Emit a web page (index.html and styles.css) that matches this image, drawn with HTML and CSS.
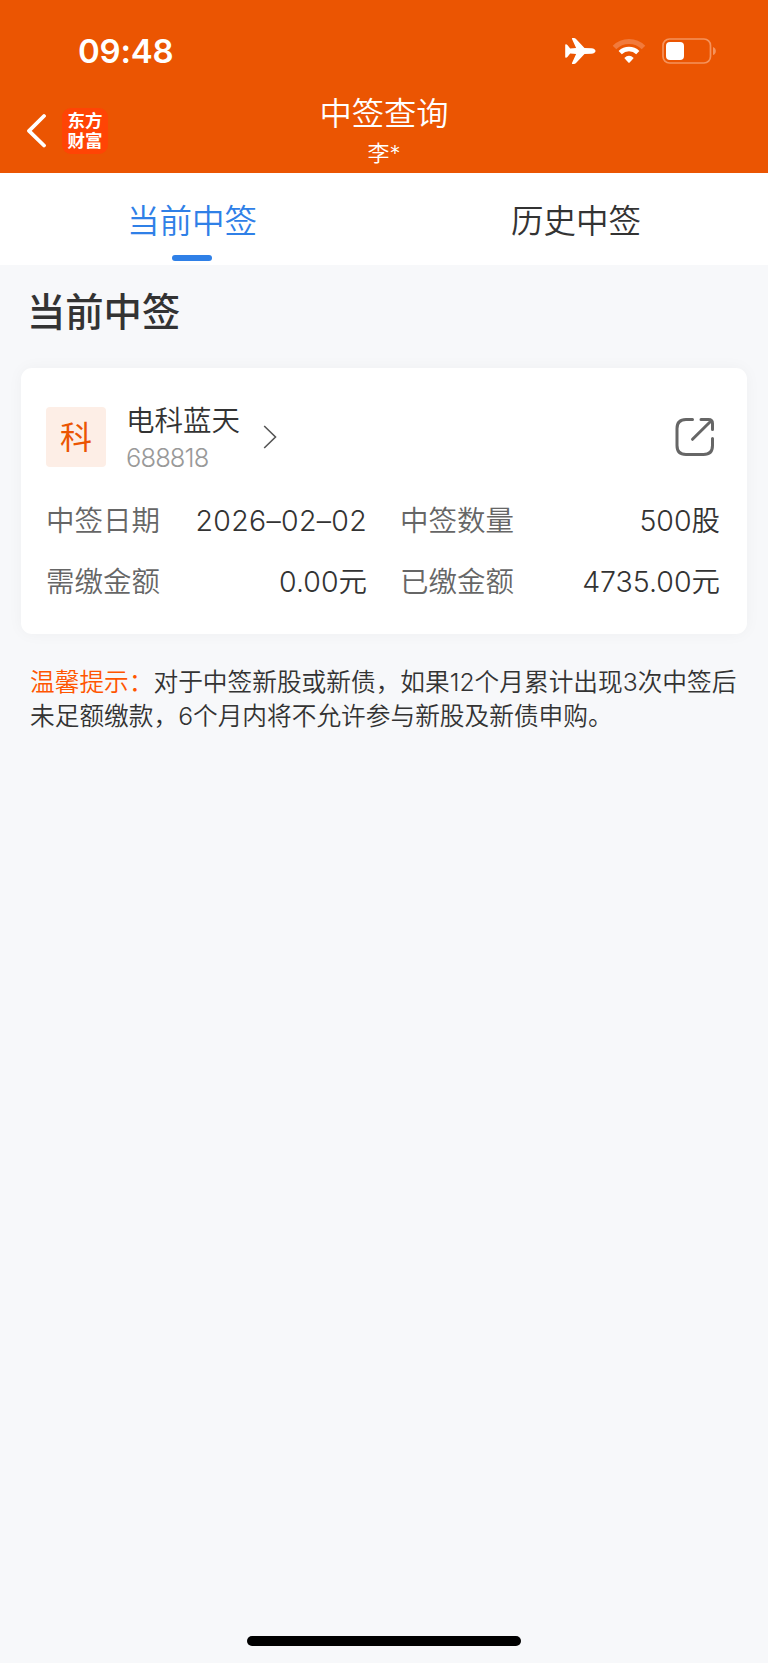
FILE: index.html
```html
<!DOCTYPE html>
<html lang="zh-CN">

<head>
    <meta charset="UTF-8">
    <title>中签查询</title>
    <link rel="stylesheet" href="styles.css">
</head>

<body>
    <header class="header">
        <div class="status_bar">
            <span class="time">09:48</span>
            <div class="status_icons">
                <svg class="plane" viewBox="0 0 31 28" width="31" height="28">
                    <path d="M26.500 11.200C29 11.500 30.500 12.500 30.500 14S29 16.500 26.500 16.800L19.500 17L10.800 26.200Q10 27 9 27H7.500Q6.600 27 7 26.100L11.100 16.900L5.200 16.500L2.400 20Q1.900 20.800 0.900 20.800Q0.200 20.800 0.200 20V8Q0.200 7.200 0.900 7.200Q1.900 7.200 2.400 8L5.200 11.500L11.100 11.100L7 1.900Q6.600 1 7.500 1H9Q10 1 10.800 1.800L19.500 11Z" fill="#fff"/>
                </svg>
                <svg class="wifi" viewBox="0 0 34 26" width="34" height="26">
                    <path d="M2.500 9.600A20.500 20.500 0 0 1 31.500 9.600" fill="none" stroke="#f17a3c" stroke-width="5"/>
                    <path d="M8.200 14.600A12.700 12.700 0 0 1 25.800 14.600" fill="none" stroke="#fff" stroke-width="4.600"/>
                    <path d="M12.300 19.900Q17 15.800 21.700 19.900L17.700 24.400Q17 25.100 16.300 24.400Z" fill="#fff"/>
                </svg>
                <svg class="battery" viewBox="0 0 54 26" width="54" height="26">
                    <rect x="1" y="1" width="47.500" height="24" rx="6.500" fill="none" stroke="#f5935c" stroke-width="1.700"/>
                    <rect x="4" y="4" width="18" height="18" rx="4" fill="#fff"/>
                    <path d="M51 9Q53.800 10 53.800 13T51 17Z" fill="#f5935c"/>
                </svg>
            </div>
        </div>
        <div class="nav_bar">
            <div class="nav_left">
                <svg class="back" viewBox="0 0 20 36" width="20" height="36">
                    <path d="M18 3L3 17.800L18 32.500" fill="none" stroke="#fff" stroke-width="3.800" stroke-linecap="round" stroke-linejoin="round"/>
                </svg>
                <div class="logo">东方<br>财富</div>
            </div>
            <div class="nav_title">
                <h1>中签查询</h1>
                <p>李*</p>
            </div>
        </div>
    </header>

    <nav class="tabs">
        <a class="tab active">当前中签</a>
        <a class="tab">历史中签</a>
    </nav>

    <main class="content">
        <h2>当前中签</h2>

        <section class="card">
            <div class="stock">
                <span class="badge">科</span>
                <div class="stock_info">
                    <div class="stock_name">电科蓝天</div>
                    <div class="stock_code">688818</div>
                </div>
                <svg class="arrow" viewBox="0 0 14 24" width="14" height="24">
                    <path d="M1.200 1L12.500 12L1.200 23" fill="none" stroke="#555" stroke-width="1.600"/>
                </svg>
                <svg class="share" viewBox="0 0 40 40" width="40" height="40">
                    <g fill="none" stroke="#666" stroke-width="3" stroke-linecap="round" stroke-linejoin="round">
                        <path d="M17.500 2.500H11Q2 2.500 2 11.500V28.500Q2 37.500 11 37.500H28.500Q37.500 37.500 37.500 28.500V21.500"/>
                        <path d="M26 2.500H33.500Q37.500 2.500 37.500 6.500V12.500M36 4L17.500 22.300"/>
                    </g>
                </svg>
            </div>

            <div class="details">
                <div class="item"><span class="label">中签日期</span><span class="value date">2026–02–02</span></div>
                <div class="item"><span class="label">中签数量</span><span class="value">500股</span></div>
                <div class="item"><span class="label">需缴金额</span><span class="value">0.00元</span></div>
                <div class="item"><span class="label">已缴金额</span><span class="value">4735.00元</span></div>
            </div>
        </section>

        <p class="tips"><span>温馨提示：</span>对于中签新股或新债，如果12个月累计出现3次中签后<br>未足额缴款，6个月内将不允许参与新股及新债申购。</p>
    </main>

    <div class="home_bar"></div>
</body>

</html>
```
FILE: styles.css
```css
* {
    margin: 0;
    padding: 0;
    box-sizing: border-box;
}

body {
    display: flex;
    flex-direction: column;
    height: 1663px;
    background: #f7f8fa;
    color: #333;
    font-family: Inter, "Noto Sans CJK SC", sans-serif;
    font-weight: 350;
}

h1,
h2 {
    font-weight: 350;
}

/* header */
.header {
    height: 173px;
    background: #eb5502;
    color: #fff;
}

.status_bar {
    display: flex;
    justify-content: space-between;
    height: 96px;
    padding: 30px 52px 0 78px;
}

.time {
    height: 42px;
    font-size: 33px;
    line-height: 43px;
    font-weight: 600;
    letter-spacing: -.2px;
}

.status_icons {
    display: flex;
    align-items: center;
    height: 42px;
}

.wifi {
    margin-left: 16px;
}

.battery {
    margin-left: 16px;
}

.nav_bar {
    display: grid;
    grid-template-columns: 1fr auto 1fr;
}

.nav_left {
    display: flex;
    align-items: center;
    height: 70px;
    padding-left: 26px;
}

.logo {
    width: 46px;
    height: 46px;
    margin-left: 16px;
    padding-top: 3px;
    border-radius: 9px;
    background: #ff4405;
    font-size: 17.5px;
    line-height: 19.5px;
    font-weight: 700;
    text-align: center;
}

.nav_title {
    text-align: center;
}

.nav_title h1 {
    font-size: 32.3px;
    line-height: 36px;
}

.nav_title p {
    font-size: 22px;
    line-height: 42px;
}

/* tabs */
.tabs {
    display: flex;
    height: 92px;
    background: #fff;
}

.tab {
    display: flex;
    flex: 1;
    flex-direction: column;
    align-items: center;
    font-size: 32.5px;
    line-height: 97px;
}

.active {
    color: #2f80e7;
}

.active::after {
    content: "";
    width: 40px;
    height: 6px;
    margin-top: -15px;
    border-radius: 3px;
    background: #2f80e7;
}

/* content */
.content {
    flex: 1;
    padding: 0 21px;
}

h2 {
    padding: 17px 0 0 6px;
    font-size: 38.3px;
    line-height: 60px;
    font-weight: 500;
}

.card {
    height: 266px;
    margin-top: 26px;
    padding: 32px 27px 0 25px;
    border-radius: 11px;
    background: #fff;
    box-shadow: 0 0 16px rgba(0, 0, 0, .04);
}

.stock {
    display: flex;
    align-items: center;
    height: 74px;
}

.badge {
    width: 60px;
    height: 60px;
    border-radius: 4px;
    background: #fdeee6;
    color: #eb5502;
    font-size: 32px;
    line-height: 61px;
    font-weight: 400;
    text-align: center;
}

.stock_info {
    padding-top: 4px;
    margin-left: 20px;
}

.stock_name {
    font-size: 28.5px;
    line-height: 38px;
}

.stock_code {
    color: #999;
    font-size: 25.5px;
    line-height: 36px;
    font-weight: 300;
    letter-spacing: -.9px;
}

.arrow {
    margin-left: 23px;
}

.share {
    margin: 0 5px 0 auto;
}

.details {
    display: grid;
    grid-template-columns: 321px 320px;
    justify-content: space-between;
    margin-top: 16px;
}

.item {
    display: flex;
    justify-content: space-between;
    font-size: 28.5px;
    line-height: 61px;
}

.label {
    color: #666;
}

.date {
    letter-spacing: .3px;
}

.tips {
    padding: 31px 0 0 9px;
    font-size: 24.7px;
    line-height: 34.3px;
    white-space: nowrap;
}

.tips span {
    color: #ff5500;
}

.home_bar {
    width: 274px;
    height: 10px;
    margin: 0 auto 17px;
    border-radius: 5px;
    background: #000;
}
```
